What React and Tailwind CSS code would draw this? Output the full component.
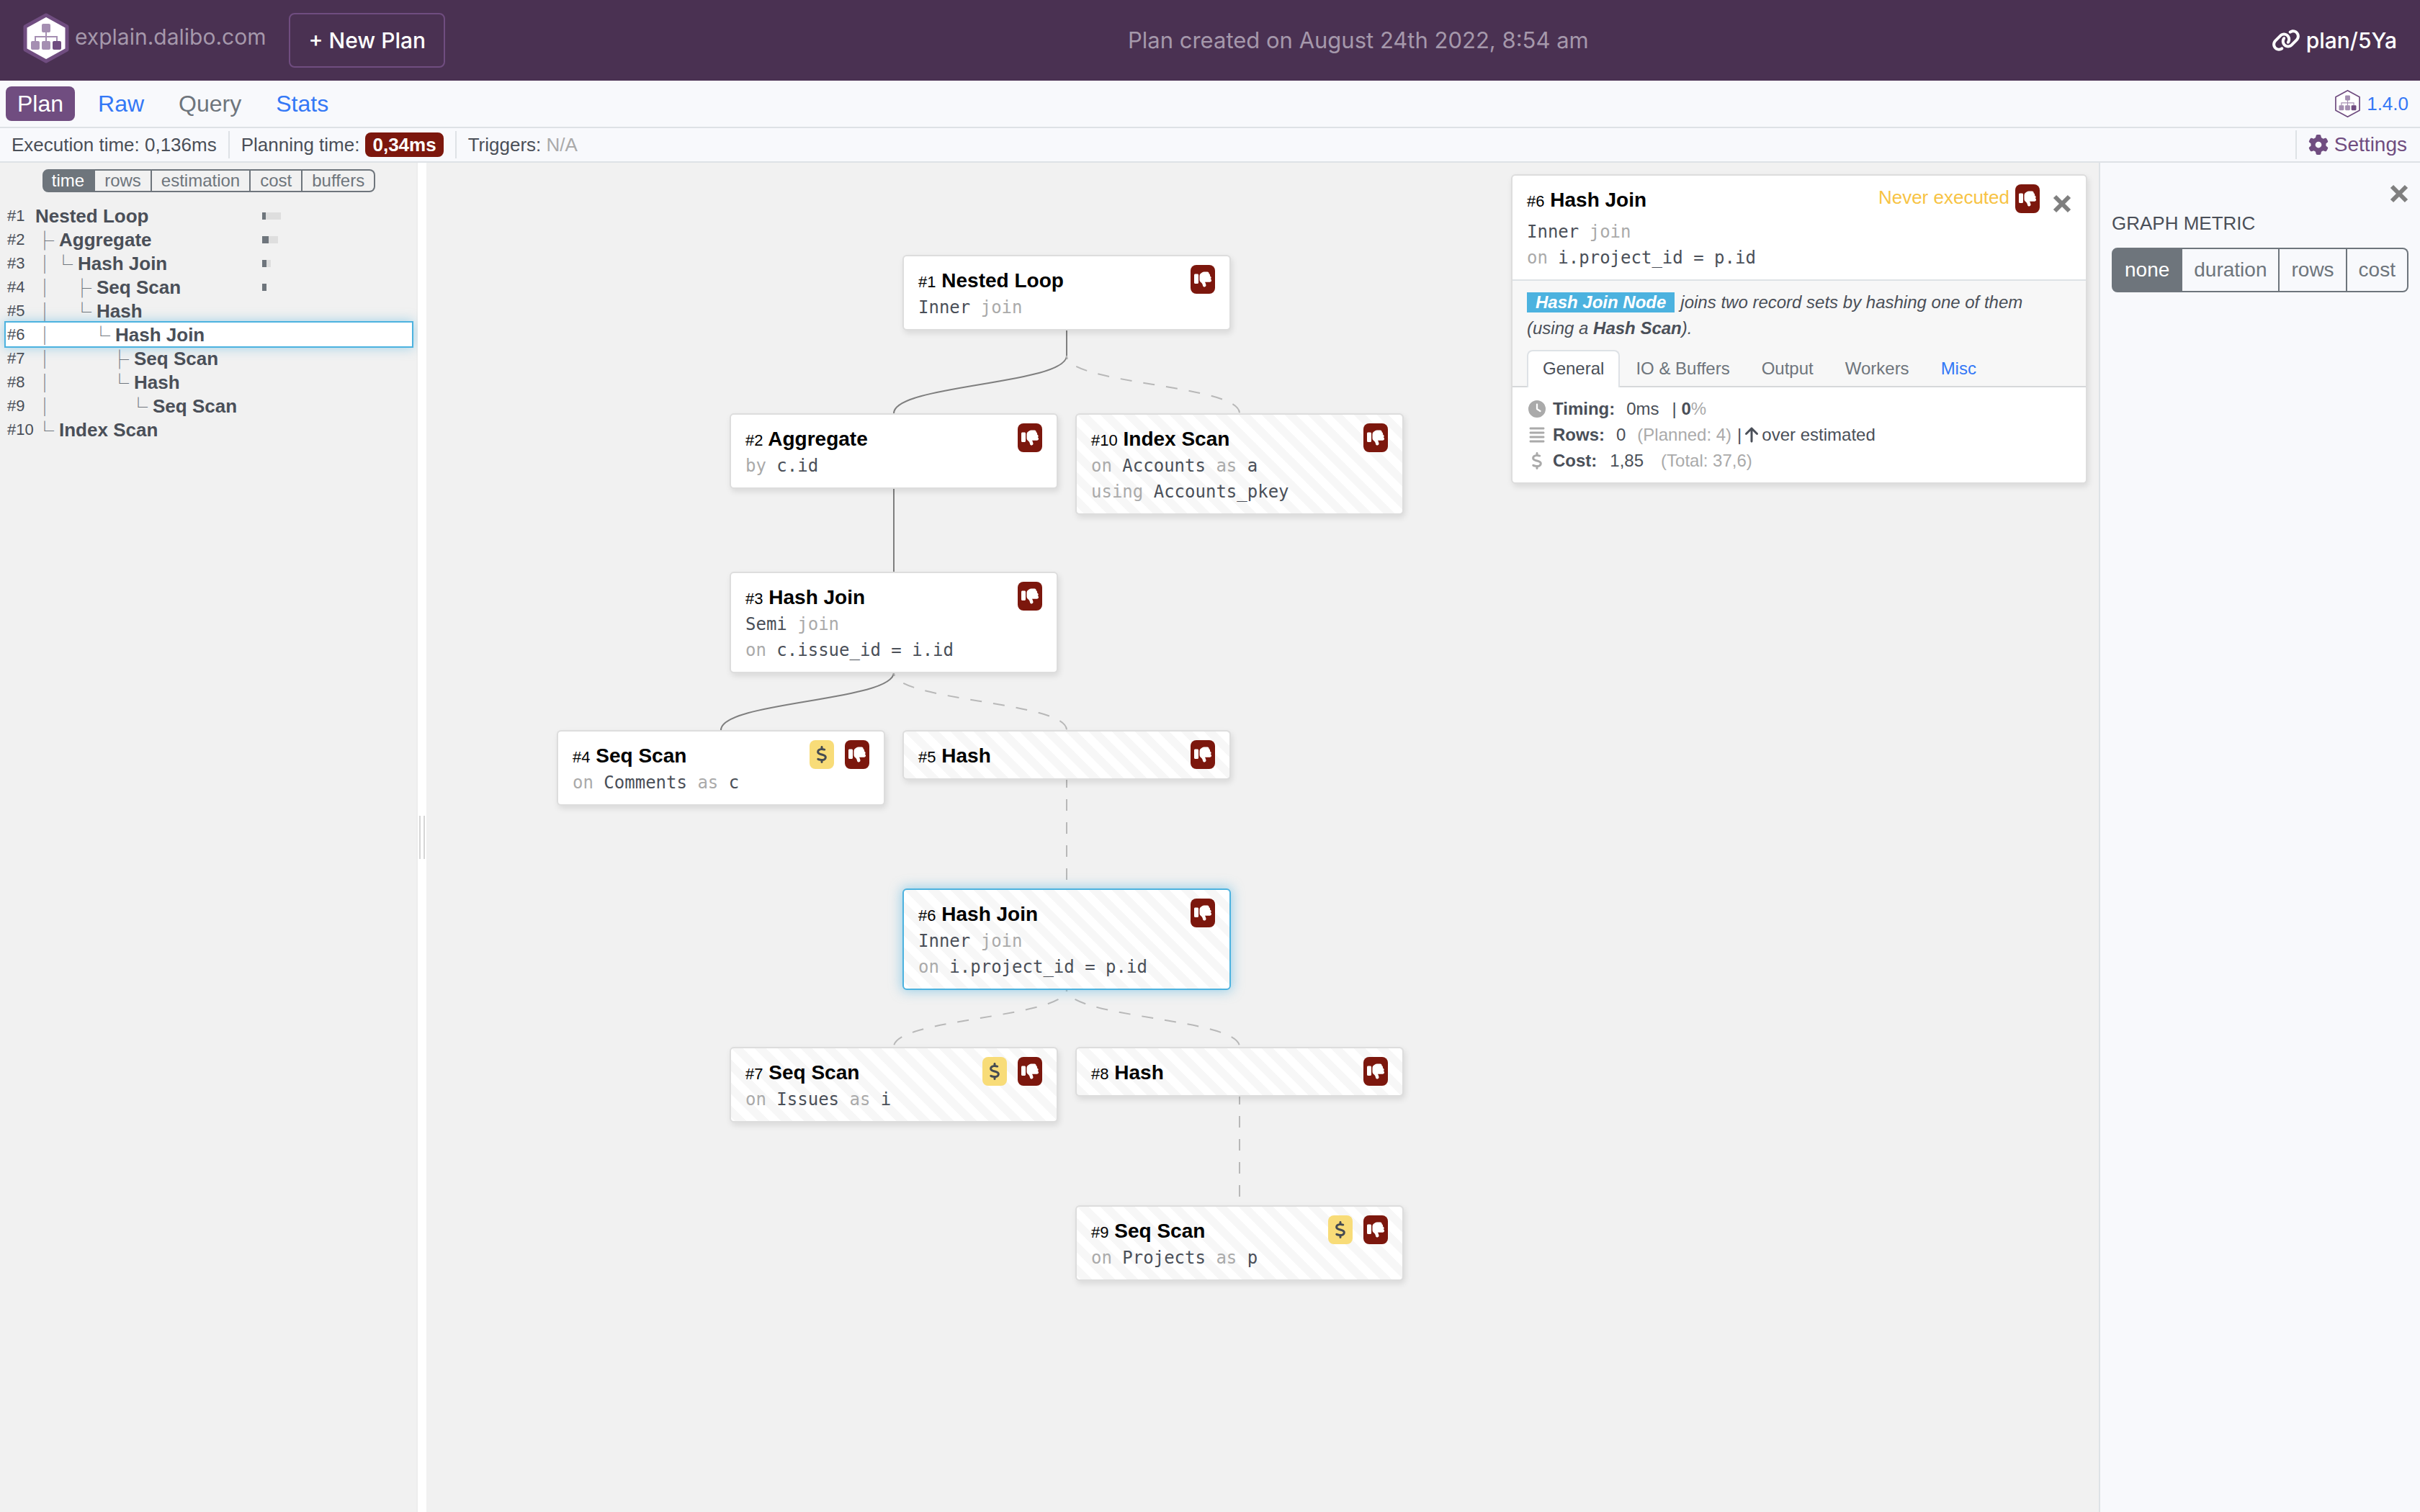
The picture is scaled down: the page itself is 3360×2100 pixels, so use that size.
import { Fragment } from "react";
import {
  FaThumbsDown,
  FaDollarSign,
  FaLink,
  FaGear,
  FaClock,
  FaAlignJustify,
  FaArrowUp,
} from "react-icons/fa6";

const sans = "font-['Liberation_Sans',Arial,sans-serif]";
const ui = "font-['Inter',sans-serif]";
const mono = "font-['DejaVu_Sans_Mono',monospace]";

function Logo({ className, stroke }) {
  return (
    <svg viewBox="0 0 64 70" className={className} aria-hidden="true">
      <path
        d="M32 3 L61 19 V51 L32 67 L3 51 V19 Z"
        fill="#fff"
        stroke="#704d80"
        strokeWidth={stroke}
        strokeLinejoin="round"
      />
      <path d="M32 26 V40 M17 40 V33 H47 V40" fill="none" stroke="#a58fb2" strokeWidth="2" />
      <rect x="26" y="15" width="12" height="12" rx="2" fill="#a58fb2" />
      <rect x="11" y="39" width="12" height="12" rx="2" fill="#a58fb2" />
      <rect x="26" y="39" width="12" height="12" rx="2" fill="#a58fb2" />
      <rect x="41" y="39" width="12" height="12" rx="2" fill="#704d80" />
    </svg>
  );
}

function CloseIcon() {
  return (
    <svg viewBox="0 0 26 26" className="size-[26px]" aria-hidden="true">
      <path d="M3 3 L23 23 M23 3 L3 23" stroke="#7f7f7f" strokeWidth="6" />
    </svg>
  );
}

function Badge({ kind }) {
  return kind === "cost" ? (
    <span className="flex h-10 w-[34px] items-center justify-center rounded-lg bg-[#f8dc78] text-[#454b52]">
      <FaDollarSign className="size-6" />
    </span>
  ) : (
    <span className="flex h-10 w-[34px] items-center justify-center rounded-lg bg-[#7c170d] text-white">
      <FaThumbsDown className="size-6" />
    </span>
  );
}

function ButtonGroup({ items, label, buttonClass, className }) {
  return (
    <div role="group" aria-label={label} className={`flex text-[#6e757c] ${className}`}>
      {items.map((item, i) => (
        <button
          key={item}
          type="button"
          aria-pressed={i === 0}
          className={`border-2 border-[#6e757c] not-first:border-l-0 first:rounded-l-lg last:rounded-r-lg aria-pressed:bg-[#6e757c] aria-pressed:text-white ${buttonClass}`}
        >
          {item}
        </button>
      ))}
    </div>
  );
}

const tree = [
  { id: 1, name: "Nested Loop", cells: [], bar: [5, 21] },
  { id: 2, name: "Aggregate", cells: ["├"], bar: [9, 13] },
  { id: 3, name: "Hash Join", cells: ["│", "└"], bar: [6, 6] },
  { id: 4, name: "Seq Scan", cells: ["│", "", "├"], bar: [6, 0] },
  { id: 5, name: "Hash", cells: ["│", "", "└"] },
  { id: 6, name: "Hash Join", cells: ["│", "", "", "└"], selected: true },
  { id: 7, name: "Seq Scan", cells: ["│", "", "", "", "├"] },
  { id: 8, name: "Hash", cells: ["│", "", "", "", "└"] },
  { id: 9, name: "Seq Scan", cells: ["│", "", "", "", "", "└"] },
  { id: 10, name: "Index Scan", cells: ["└"] },
];

const nodes = [
  { id: 1, name: "Nested Loop", x: 661, y: 128, lines: ["Inner *join*"] },
  { id: 2, name: "Aggregate", x: 421, y: 348, lines: ["*by* c.id"] },
  { id: 10, name: "Index Scan", x: 901, y: 348, never: true, lines: ["*on* Accounts *as* a", "*using* Accounts_pkey"] },
  { id: 3, name: "Hash Join", x: 421, y: 568, lines: ["Semi *join*", "*on* c.issue_id = i.id"] },
  { id: 4, name: "Seq Scan", x: 181, y: 788, cost: true, lines: ["*on* Comments *as* c"] },
  { id: 5, name: "Hash", x: 661, y: 788, never: true, lines: [] },
  { id: 6, name: "Hash Join", x: 661, y: 1008, never: true, selected: true, lines: ["Inner *join*", "*on* i.project_id = p.id"] },
  { id: 7, name: "Seq Scan", x: 421, y: 1228, never: true, cost: true, lines: ["*on* Issues *as* i"] },
  { id: 8, name: "Hash", x: 901, y: 1228, never: true, lines: [] },
  { id: 9, name: "Seq Scan", x: 901, y: 1448, never: true, cost: true, lines: ["*on* Projects *as* p"] },
];

const edges = [
  { d: "M889 225 V268 C889 308 649 308 649 348" },
  { d: "M889 225 V268 C889 308 1129 308 1129 348", dashed: true },
  { d: "M649 440 V568" },
  { d: "M649 697 V708 C649 748 409 748 409 788" },
  { d: "M649 697 V708 C649 748 889 748 889 788", dashed: true },
  { d: "M889 852 V1008", dashed: true },
  { d: "M889 1135 V1148 C889 1188 649 1188 649 1228", dashed: true },
  { d: "M889 1135 V1148 C889 1188 1129 1188 1129 1228", dashed: true },
  { d: "M1129 1292 V1448", dashed: true },
];

function CodeLine({ text }) {
  return (
    <div className={`${mono} text-[24px] leading-9 whitespace-pre text-[#4a4f58]`}>
      {text.split("*").map((part, i) =>
        i % 2 ? (
          <span key={i} className="text-[#aaaaaa]">
            {part}
          </span>
        ) : (
          <Fragment key={i}>{part}</Fragment>
        )
      )}
    </div>
  );
}

function NodeTitle({ id, name }) {
  return (
    <h3 className="pt-0.5 text-[28px] leading-10 font-bold whitespace-nowrap text-black">
      <span className="text-[22px] font-normal">#{id}</span> {name}
    </h3>
  );
}

function PlanNode({ node }) {
  return (
    <article
      className={`absolute w-[456px] rounded-md border-2 px-5 py-3 ${
        node.selected
          ? "border-[#4cb2df] shadow-[0_0_16px_2px_rgba(76,178,223,0.5)]"
          : "border-[#dddddd] shadow-[2px_4px_8px_rgba(0,0,0,0.1)]"
      } ${
        node.never
          ? "bg-white bg-[linear-gradient(45deg,#f7f7f7_25%,#fff_25%,#fff_50%,#f7f7f7_50%,#f7f7f7_75%,#fff_75%)] bg-size-[32px_32px]"
          : "bg-white"
      }`}
      style={{ left: node.x, top: node.y }}
    >
      <header className="flex h-[41px] items-start justify-between">
        <NodeTitle id={node.id} name={node.name} />
        <div className="flex gap-[15px]">
          {node.cost && <Badge kind="cost" />}
          <Badge kind="slow" />
        </div>
      </header>
      {node.lines.map((line) => (
        <CodeLine key={line} text={line} />
      ))}
    </article>
  );
}

function Detail() {
  const muted = "text-[#aaaaaa]";
  return (
    <section className="absolute top-4 right-4 w-[800px] rounded-md border-2 border-[#dddddd] bg-white text-[24px] leading-9 text-[#4a4f58] shadow-[2px_4px_8px_rgba(0,0,0,0.1)]">
      <header className="border-b-2 border-[#dee2e6] px-5 pt-3 pb-3">
        <div className="mb-1 flex items-start">
          <NodeTitle id={6} name="Hash Join" />
          <span className="mr-2 ml-auto text-[26px] text-[#f7c344]">Never executed</span>
          <Badge kind="slow" />
          <button type="button" aria-label="Close details" className="mt-[14px] ml-[18px]">
            <CloseIcon />
          </button>
        </div>
        <CodeLine text="Inner *join*" />
        <CodeLine text="*on* i.project_id = p.id" />
      </header>
      <div className="border-b-2 border-[#d6d8da] bg-[#f7f7f7] px-5 pt-3">
        <p className="italic">
          <span className="mr-2 inline-block bg-[#4cb2df] px-3 leading-7 font-bold text-white">
            Hash Join Node
          </span>
          joins two record sets by hashing one of them
          <br />
          (using a <b>Hash Scan</b>).
        </p>
        <nav className="-mb-0.5 mt-3 flex text-[#6e757c]">
          <a href="#general" className="rounded-t-lg border-2 border-b-0 border-[#dee2e6] bg-white px-5 pt-[6px] pb-2 text-[#4a4f58]">
            General
          </a>
          <a href="#io" className="px-[22px] pt-2 pb-2">IO &amp; Buffers</a>
          <a href="#output" className="px-[22px] pt-2 pb-2">Output</a>
          <a href="#workers" className="px-[22px] pt-2 pb-2">Workers</a>
          <a href="#misc" className="px-[22px] pt-2 pb-2 text-[#3478f6]">Misc</a>
        </nav>
      </div>
      <div className="px-5 pt-3 pb-3">
        <div className="flex items-center whitespace-pre">
          <FaClock className="mr-2.5 ml-0.5 size-6 text-[#aaaaaa]" />
          <b>Timing:</b>
          <span className="ml-4">0ms</span>
          <span className="ml-[18px]">| <b>0</b><span className={muted}>%</span></span>
        </div>
        <div className="flex items-center whitespace-pre">
          <FaAlignJustify className="mr-2.5 ml-0.5 size-6 text-[#aaaaaa]" />
          <b>Rows:</b>
          <span className="ml-4">0</span>
          <span className={`ml-4 ${muted}`}>(Planned: 4)</span>
          <span className="ml-2">|</span>
          <FaArrowUp className="mx-1 h-6 w-5" />
          over estimated
        </div>
        <div className="flex items-center whitespace-pre">
          <FaDollarSign className="mr-2.5 ml-0.5 size-6 text-[#aaaaaa]" />
          <b>Cost:</b>
          <span className="ml-[18px]">1,85</span>
          <span className={`ml-6 ${muted}`}>(Total: 37,6)</span>
        </div>
      </div>
    </section>
  );
}

export default function App() {
  return (
    <div className={`${sans} flex min-h-screen flex-col bg-[#f8f9fc] text-[26px] leading-8 text-[#4a4f58]`}>
      <header className={`${ui} flex h-28 items-center justify-between bg-[#4a3152] px-8 text-[30px] text-white`}>
        <div className="flex items-center">
          <a href="#home" className="mr-8 flex items-center gap-2 pb-1.5 text-[#a598ab]">
            <Logo className="h-[70px] w-16" stroke={5} />
            <span className="pb-1">explain.dalibo.com</span>
          </a>
          <button type="button" className="h-[76px] rounded-lg border-2 border-[#704d80] px-[25px] font-medium">
            + New Plan
          </button>
        </div>
        <p className="text-[31px] text-[#a598ab]">Plan created on August 24th 2022, 8:54 am</p>
        <a href="#plan" className="flex items-center gap-2 font-medium">
          <FaLink className="h-8 w-10" />
          plan/5Ya
        </a>
      </header>

      <div className="flex h-[66px] items-center justify-between border-b-2 border-[#dee2e6] pr-4 pl-2">
        <nav className="flex gap-4 text-[32px] leading-[48px] text-[#3478f6]">
          <a href="#tab-plan" className="rounded-lg bg-[#704d80] px-4 text-white">Plan</a>
          <a href="#tab-raw" className="px-4">Raw</a>
          <a href="#tab-query" className="px-4 text-[#6e757c]">Query</a>
          <a href="#tab-stats" className="px-4">Stats</a>
        </nav>
        <a href="#version" className="flex items-center gap-2 text-[#3478f6]">
          <Logo className="h-10 w-[37px]" stroke={3} />
          1.4.0
        </a>
      </div>

      <div className="flex h-12 items-center border-b-2 border-[#dee2e6] pr-[18px] pl-4">
        <div className="flex h-[38px] items-center border-r-2 border-[#dee2e6] pr-4">Execution time: 0,136ms</div>
        <div className="flex h-[38px] items-center gap-2 border-r-2 border-[#dee2e6] px-4">
          Planning time:
          <b className="rounded-lg bg-[#7c170d] px-2.5 leading-[34px] text-white">0,34ms</b>
        </div>
        <div className="px-4">
          Triggers: <span className="text-[#aaaaaa]">N/A</span>
        </div>
        <button type="button" className="ml-auto flex h-10 items-center gap-2 border-l-2 border-[#dee2e6] pl-4 text-[28px] text-[#704d80]">
          <FaGear className="size-7" />
          Settings
        </button>
      </div>

      <div className="flex flex-1">
        <aside className="w-[580px] border-r-2 border-[#ededed] bg-[#f1f1f1] pt-[9px] pr-1.5 pl-2">
          <ButtonGroup
            label="Diagram metric"
            items={["time", "rows", "estimation", "cost", "buffers"]}
            className="justify-center"
            buttonClass="h-8 px-[13px] text-[24px] leading-7 first:pl-[11px]"
          />
          <ul className="mt-4">
            {tree.map((row) => (
              <li
                key={row.id}
                className={`flex h-[33px] items-center pl-0.5 ${
                  row.selected
                    ? "bg-white shadow-[0_0_0_2px_#4cb2df,0_0_16px_2px_rgba(76,178,223,0.5)]"
                    : ""
                }`}
              >
                <span className="w-[39px] text-[22px]">#{row.id}</span>
                <span className="flex w-[315px] items-center">
                  {row.cells.map((cell, i) => (
                    <span key={i} className="w-[26px] font-['Noto_Sans_CJK_SC',sans-serif] text-[26px] leading-8 text-[#6e757c]">
                      {cell}
                    </span>
                  ))}
                  <b className={row.cells.length ? "pl-[7px]" : ""}>{row.name}</b>
                </span>
                {row.bar && (
                  <span className="flex h-2.5">
                    <span className="bg-[#6e757c]" style={{ width: row.bar[0] }} />
                    <span className="bg-[#dedede]" style={{ width: row.bar[1] }} />
                  </span>
                )}
              </li>
            ))}
          </ul>
        </aside>

        <div role="separator" className="flex w-3 items-center justify-center gap-1 bg-white">
          <span className="h-[60px] w-0.5 bg-[#d6d6d6]" />
          <span className="h-[60px] w-0.5 bg-[#d6d6d6]" />
        </div>

        <main className="relative flex-1 overflow-hidden bg-[#f1f1f1]">
          <svg className="absolute inset-0 size-full" fill="none" strokeWidth="2" aria-hidden="true">
            {edges.map((edge) => (
              <path
                key={edge.d + edge.dashed}
                d={edge.d}
                stroke={edge.dashed ? "#b8b8b8" : "#7f7f7f"}
                strokeDasharray={edge.dashed ? "16 16" : undefined}
              />
            ))}
            <path d="M889 225 V268 M649 697 V708" stroke="#7f7f7f" />
          </svg>
          {nodes.map((node) => (
            <PlanNode key={node.id} node={node} />
          ))}
          <Detail />
        </main>

        <aside className="w-[446px] border-l-2 border-[#dee2e6] px-4 pt-[30px]">
          <div className="flex justify-end">
            <button type="button" aria-label="Close settings" className="block">
              <CloseIcon />
            </button>
          </div>
          <h2 className="pt-3 uppercase">Graph metric</h2>
          <ButtonGroup
            label="Graph metric"
            items={["none", "duration", "rows", "cost"]}
            className="mt-[18px]"
            buttonClass="h-[62px] px-4 text-[28px]"
          />
        </aside>
      </div>
    </div>
  );
}
